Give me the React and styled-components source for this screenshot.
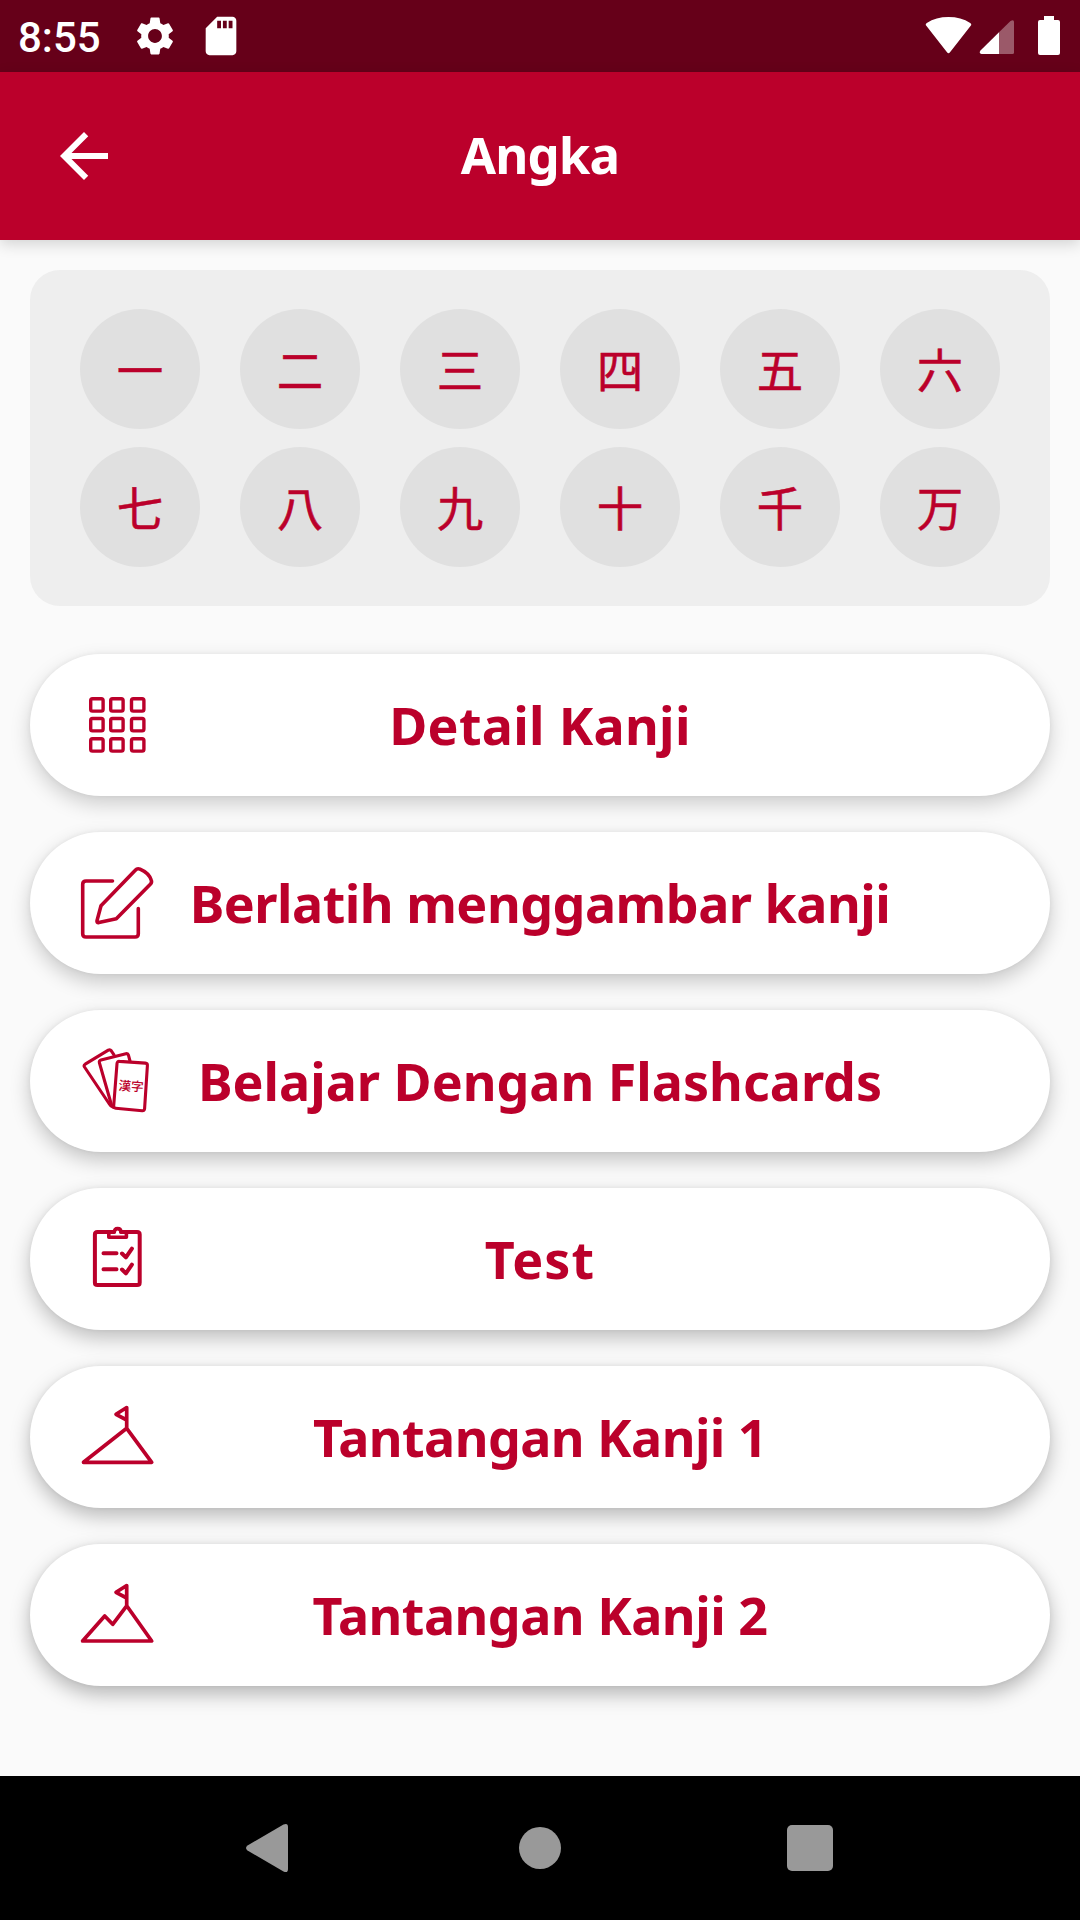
import React from "react";
import styled, { createGlobalStyle } from "styled-components";
import { MdArrowBack, MdSdCard, MdSettings } from "react-icons/md";

const GlobalStyle = createGlobalStyle`
  * {
    box-sizing: border-box;
  }

  body {
    margin: 0;
    background-color: #fafafa;
  }

  a {
    text-decoration: none;
  }
`;

const Screen = styled.div`
  display: flex;
  flex-direction: column;

  width: 1080px;
  height: 1920px;
  overflow: hidden;

  background-color: #fafafa;
`;

const StatusBar = styled.div`
  display: flex;
  align-items: center;
  justify-content: space-between;
  flex: none;

  height: 72px;
  padding: 0 20px 0 18px;

  background-color: #660019;
  color: #ffffff;
`;

const StatusGroup = styled.div`
  display: flex;
  align-items: center;
`;

const Clock = styled.span`
  width: 114px;
  padding-top: 3px;

  font-family: Roboto, sans-serif;
  font-size: 42px;
  font-weight: 500;
  line-height: 72px;
`;

const StatusIcon = styled.span`
  display: flex;
  margin-right: 20px;
`;

const Header = styled.header`
  display: grid;
  grid-template-columns: 72px 1fr 72px;
  align-items: center;
  flex: none;

  height: 168px;
  padding: 0 48px;

  background-color: #bb002b;
  box-shadow: 0 4px 14px rgba(0, 0, 0, 0.16);
  color: #ffffff;
`;

const BackButton = styled.a`
  display: flex;
  color: inherit;
`;

const Title = styled.h1`
  margin: 0;
  padding-bottom: 4px;

  font-family: "Noto Sans", sans-serif;
  font-size: 51px;
  font-weight: 700;
  letter-spacing: -0.9px;
  line-height: 72px;
  text-align: center;
`;

const Content = styled.main`
  flex: 1;
  padding: 30px 30px 0;
`;

const KanjiPanel = styled.section`
  display: grid;
  grid-template-columns: repeat(6, 120px);
  gap: 18px 40px;

  height: 336px;
  padding: 39px 50px;

  background-color: #eeeeee;
  border-radius: 30px;
`;

const Kanji = styled.div`
  display: flex;
  align-items: center;
  justify-content: center;

  height: 120px;
  padding-bottom: 2px;

  background-color: #e0e0e0;
  border-radius: 50%;
  color: #bb002b;
  font-family: "Noto Sans CJK JP", sans-serif;
  font-size: 46.5px;
  line-height: 72px;
  -webkit-text-stroke: 0.5px #bb002b;
`;

const Menu = styled.nav`
  display: flex;
  flex-direction: column;
  gap: 36px;

  margin-top: 48px;
`;

const MenuButton = styled.a`
  display: grid;
  grid-template-columns: 80px 1fr 80px;
  align-items: center;

  height: 142px;
  padding: 0 47px;

  background-color: #ffffff;
  border-radius: 71px;
  box-shadow: 0 8px 20px rgba(0, 0, 0, ${(props) => props.$shade}),
    0 0 5px rgba(0, 0, 0, 0.06);
  color: #bb002b;
`;

const Label = styled.span`
  font-family: "Noto Sans", sans-serif;
  font-size: 52px;
  font-weight: 700;
  letter-spacing: ${(props) => props.$tracking}px;
  line-height: 72px;
  text-align: center;
  white-space: nowrap;
`;

const LineIcon = styled.svg`
  width: 80px;
  height: 80px;

  fill: none;
  stroke: currentColor;
  stroke-linecap: round;
  stroke-linejoin: round;
`;

const CardText = styled.text`
  fill: currentColor;
  stroke: none;
  font-family: "Noto Sans CJK JP", sans-serif;
  font-size: 12.6px;
  font-weight: 500;
`;

const SystemNav = styled.footer`
  display: grid;
  grid-template-columns: repeat(3, 270px);
  align-items: center;
  justify-content: center;
  justify-items: center;
  flex: none;

  height: 144px;

  background-color: #000000;
`;

const HomeKey = styled.span`
  width: 42px;
  height: 42px;

  background-color: #999999;
  border-radius: 50%;
`;

const RecentsKey = styled.span`
  width: 46px;
  height: 46px;

  background-color: #999999;
  border-radius: 5px;
`;

const GridIcon = () => (
  <LineIcon viewBox="0 0 80 80" strokeWidth="3.4">
    {[13.7, 33.5, 53.7].map((y) =>
      [13.7, 33.7, 54.5].map((x) => (
        <rect key={`${x}-${y}`} x={x} y={y} width="12.4" height="12.4" rx="1.8" />
      ))
    )}
  </LineIcon>
);

const DrawIcon = () => (
  <LineIcon viewBox="0 0 80 80" strokeWidth="3.6">
    <path d="M35.500 18H9q-3.300 0-3.300 3.300v49.400q0 3.300 3.300 3.300h49q3.300 0 3.300-3.300V45.500" />
    <path d="M24 42.700 58.300 7.200Q60.300 5 63 6.200 72 10 74.300 17.300q.8 2.200-1 4L39.300 55.700 21.800 59.600q-2.200.2-1.800-2Z" />
  </LineIcon>
);

const CardsIcon = () => (
  <LineIcon viewBox="0 0 80 80" strokeWidth="3.1">
    <path d="M37 13.800 34.300 9.800q-1.200-1.600-3-.6L8.200 23.200q-1.700 1.100-.7 2.800L32 62.500q1.500 2.800 4.300 3.800" />
    <path d="m53 20-1.500-5.700q-.6-2-2.600-1.500L24 19q-2.200.6-1.600 2.700L34.500 64" />
    <path d="m42.400 20.400 26 1.700q2.200.2 2 2.400L67.600 67.600q-.2 2.300-2.400 2.100l-26.500-2.500q-2.200-.2-2-2.400L40 22.600q.2-2.400 2.400-2.200Z" />
    <CardText x="41.400" y="49.800" transform="rotate(4 54 46)">
      漢字
    </CardText>
  </LineIcon>
);

const ClipboardIcon = () => (
  <LineIcon viewBox="0 0 80 80" strokeWidth="4">
    <path d="M37 13H20.500q-2.600 0-2.600 2.600v47.800q0 2.600 2.600 2.600h39.600q2.600 0 2.600-2.600V15.600q0-2.600-2.600-2.600H44" />
    <path d="M31.800 14v4.300h17.600V14M37.300 13q0-3.400 3.300-3.400T43.900 13" strokeWidth="3.600" />
    <path d="M26.500 34.300h13M26.500 50.300h13M45 34.500l3.900 3.900 6-8.800M45 50.500l3.900 3.900 6-8.800" />
  </LineIcon>
);

const HillIcon = () => (
  <LineIcon viewBox="0 0 80 80" strokeWidth="3.700">
    <path d="M6.500 65.300 49.700 31.300l25 34ZM49.700 31.300V10.500L39 17.300l10.700 5.700" />
  </LineIcon>
);

const MountainIcon = () => (
  <LineIcon viewBox="0 0 80 80" strokeWidth="3.700">
    <path d="M5.600 66 27.700 41l8 8.300L49.700 30.800 74.700 66ZM49.700 31V10.500L39 17.300l10.700 5.700" />
  </LineIcon>
);

const kanji = ["一", "二", "三", "四", "五", "六", "七", "八", "九", "十", "千", "万"];

const menu = [
  { label: "Detail Kanji", icon: GridIcon, tracking: 0.3, shade: 0.18 },
  { label: "Berlatih menggambar kanji", icon: DrawIcon, tracking: -0.5, shade: 0.2 },
  { label: "Belajar Dengan Flashcards", icon: CardsIcon, tracking: 0, shade: 0.22 },
  { label: "Test", icon: ClipboardIcon, tracking: 1.1, shade: 0.24 },
  { label: "Tantangan Kanji 1", icon: HillIcon, tracking: -0.55, shade: 0.26 },
  { label: "Tantangan Kanji 2", icon: MountainIcon, tracking: -0.5, shade: 0.28 },
];

export default function App() {
  return (
    <Screen>
      <GlobalStyle />
      <StatusBar>
        <StatusGroup>
          <Clock>8:55</Clock>
          <StatusIcon>
            <MdSettings size={46} />
          </StatusIcon>
          <StatusIcon>
            <MdSdCard size={46} />
          </StatusIcon>
        </StatusGroup>
        <svg width="136" height="40" viewBox="0 0 136 40" fill="#ffffff">
          <path d="M2.500 10Q0.800 8.300 2.800 6.900Q12 1 24.500 1T46.200 6.900Q48.200 8.300 46.500 10L26 36.300Q24.500 38 23 36.300Z" />
          <path
            d="M75 16.200 86.500 5Q90 3 90 6V36.500Q90 38 88.500 38H75Z"
            fillOpacity="0.35"
          />
          <path d="M75 16.200V38H57.500Q54.500 37.200 56.500 34.500Z" />
          <path d="M120 0h10v4h4q2 0 2 2v31q0 2-2 2h-18q-2 0-2-2V6q0-2 2-2h4z" />
        </svg>
      </StatusBar>
      <Header>
        <BackButton href="#">
          <MdArrowBack size={72} />
        </BackButton>
        <Title>Angka</Title>
      </Header>
      <Content>
        <KanjiPanel>
          {kanji.map((character) => (
            <Kanji key={character}>{character}</Kanji>
          ))}
        </KanjiPanel>
        <Menu>
          {menu.map(({ label, icon: Icon, tracking, shade }) => (
            <MenuButton key={label} href="#" $shade={shade}>
              <Icon />
              <Label $tracking={tracking}>{label}</Label>
            </MenuButton>
          ))}
        </Menu>
      </Content>
      <SystemNav>
        <svg width="60" height="60" viewBox="0 0 60 60" fill="#999999">
          <path d="M7.500 32.500Q4.500 30 7.500 27.500L43.500 6.500Q48 4.500 48 9V51Q48 55.500 43.500 53.500Z" />
        </svg>
        <HomeKey />
        <RecentsKey />
      </SystemNav>
    </Screen>
  );
}
